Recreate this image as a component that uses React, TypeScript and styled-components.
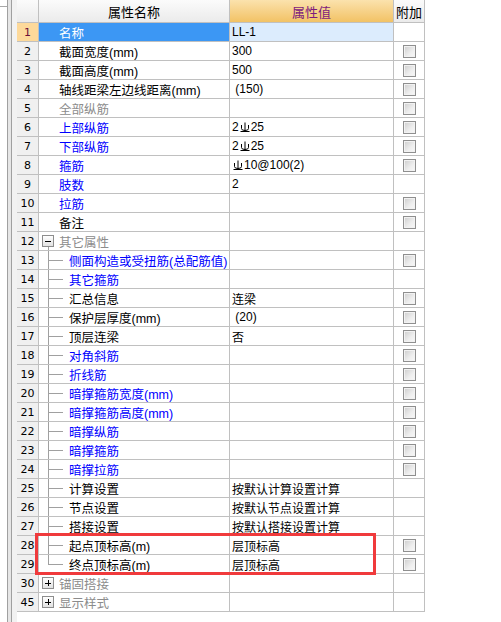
import React from "react";
import styled, { createGlobalStyle } from "styled-components";

type Tone = "normal" | "muted" | "link";
type Kind = "plain" | "group" | "child";

type PropRow = {
  no: number;
  name: string;
  value?: React.ReactNode;
  tone: Tone;
  kind: Kind;
  check?: boolean;
  open?: boolean;
  last?: boolean;
  selected?: boolean;
};

const GlobalStyle = createGlobalStyle`
  html, body {
    margin: 0;
    padding: 0;
    background: #fff;
  }
  body {
    font-family: "Noto Sans CJK SC", "Liberation Sans", sans-serif;
  }
`;

const COLUMNS = "22px 191px 164px 31px";
const GRID = "#c0c0c0";

const Page = styled.div`
  display: flex;
  height: 100vh;
  background: #fff;
`;

const Gutter = styled.div`
  flex: none;
  width: 17px;
  background:
    linear-gradient(#a8a8a8, #a8a8a8) 0 6px / 7px 1px no-repeat,
    linear-gradient(
      to right,
      #fff 0 7px,
      #a0a0a0 7px 8px,
      #e6e6e6 8px 11px,
      #a0a0a0 11px 12px,
      #f2f2f2 12px 17px
    );
`;

const Sheet = styled.div`
  position: relative;
  align-self: flex-start;
  display: flex;
  flex-direction: column;
`;

const HeaderRow = styled.div`
  display: grid;
  grid-template-columns: ${COLUMNS};
  height: 23px;
`;

const Row = styled.div`
  display: grid;
  grid-template-columns: ${COLUMNS};
  height: 19px;
`;

const HeadCell = styled.div<{ $accent?: boolean }>`
  box-sizing: border-box;
  display: flex;
  align-items: center;
  justify-content: center;
  border-right: 1px solid ${GRID};
  border-bottom: 1px solid ${GRID};
  background: ${(p) =>
    p.$accent
      ? "linear-gradient(#fbe2ad, #f2c265)"
      : "linear-gradient(#fbfbfb, #ebebeb)"};
  color: ${(p) => (p.$accent ? "#7d1a7d" : "#000")};
  font-size: 13px;
  white-space: nowrap;
`;

const NumberCell = styled.div<{ $active?: boolean }>`
  box-sizing: border-box;
  display: flex;
  align-items: center;
  justify-content: center;
  border-right: 1px solid ${GRID};
  border-bottom: 1px solid ${GRID};
  background: ${(p) => (p.$active ? "#fdd99a" : "#f0f0f0")};
  color: ${(p) => (p.$active ? "#6b0f3a" : "#000")};
  font-family: "DejaVu Sans", sans-serif;
  font-size: 11px;
`;

const NameCell = styled.div<{ $selected?: boolean; $kind: Kind; $open?: boolean }>`
  box-sizing: border-box;
  display: flex;
  align-items: center;
  overflow: hidden;
  white-space: nowrap;
  border-right: 1px solid ${GRID};
  border-bottom: 1px solid ${GRID};
  padding-left: ${(p) => (p.$kind === "plain" ? "20px" : p.$kind === "group" ? "3px" : "0")};
  background: ${(p) =>
    p.$selected
      ? "#3c97f4"
      : p.$open
      ? "linear-gradient(#a0a0a0, #a0a0a0) 9px 15px / 1px 100% no-repeat, #fff"
      : "#fff"};
`;

const ValueCell = styled.div<{ $selected?: boolean }>`
  box-sizing: border-box;
  display: flex;
  align-items: center;
  overflow: hidden;
  white-space: pre;
  border-right: 1px solid ${GRID};
  border-bottom: 1px solid ${GRID};
  padding-left: 2px;
  background: ${(p) => (p.$selected ? "#dcecfd" : "#fff")};
  color: #000;
  font-family: "Liberation Sans", "Noto Sans CJK SC", sans-serif;
  font-size: 12px;
`;

const AttachCell = styled.div`
  box-sizing: border-box;
  display: flex;
  align-items: center;
  justify-content: center;
  border-right: 1px solid ${GRID};
  border-bottom: 1px solid ${GRID};
  background: #fff;
`;

const Label = styled.span<{ $tone: Tone; $selected?: boolean }>`
  font-family: "Liberation Sans", "Noto Sans CJK SC", sans-serif;
  font-size: 12.5px;
  color: ${(p) =>
    p.$selected
      ? "#fff"
      : p.$tone === "link"
      ? "#0000ff"
      : p.$tone === "muted"
      ? "#8c8c8c"
      : "#000"};
`;

const Branch = styled.span<{ $last?: boolean }>`
  flex: none;
  align-self: stretch;
  width: 30px;
  background:
    linear-gradient(#a0a0a0, #a0a0a0) 9px 0 / 1px ${(p) => (p.$last ? "50%" : "100%")} no-repeat,
    linear-gradient(#a0a0a0, #a0a0a0) 9px 50% / 15px 1px no-repeat;
`;

const Toggle = styled.span`
  flex: none;
  box-sizing: border-box;
  width: 12px;
  height: 12px;
  margin-right: 5px;
  display: flex;
  align-items: center;
  justify-content: center;
  border: 1px solid #8d8d8d;
  background: linear-gradient(#ffffff, #e2e2e2);
`;

const Checkbox = styled.span`
  box-sizing: border-box;
  width: 13px;
  height: 13px;
  border: 1px solid #8f8f8f;
  box-shadow: inset 0 0 0 1px #f2f2f2;
  background: linear-gradient(to bottom right, #cdcdcd 0%, #eeeeee 60%, #f8f8f8 100%);
`;

const Highlight = styled.div`
  position: absolute;
  left: 18px;
  top: 533px;
  width: 341px;
  height: 42px;
  box-sizing: border-box;
  border: 3px solid #f03a3c;
  pointer-events: none;
`;

const Grade = () => (
  <svg width="10" height="12" viewBox="0 0 10 12" style={{ margin: "0 1px" }}>
    <g fill="none" stroke="#000" strokeWidth="1">
      <path d="M5 1.5V10.5" />
      <path d="M1.5 4V7.5Q1.5 9.5 5 9.5Q8.5 9.5 8.5 7.5V4" />
      <path d="M0.5 10.5H9.5" />
    </g>
  </svg>
);

const ToggleIcon = ({ open }: { open?: boolean }) => (
  <svg width="8" height="8" viewBox="0 0 8 8">
    <path d="M1 4H7" stroke="#000" strokeWidth="1" shapeRendering="crispEdges" />
    {!open && <path d="M4 1V7" stroke="#000" strokeWidth="1" shapeRendering="crispEdges" />}
  </svg>
);

const rows: PropRow[] = [
  { no: 1, name: "名称", value: "LL-1", tone: "normal", kind: "plain", selected: true },
  { no: 2, name: "截面宽度(mm)", value: "300", tone: "normal", kind: "plain", check: true },
  { no: 3, name: "截面高度(mm)", value: "500", tone: "normal", kind: "plain", check: true },
  { no: 4, name: "轴线距梁左边线距离(mm)", value: " (150)", tone: "normal", kind: "plain", check: true },
  { no: 5, name: "全部纵筋", tone: "muted", kind: "plain", check: true },
  { no: 6, name: "上部纵筋", value: <>2<Grade />25</>, tone: "link", kind: "plain", check: true },
  { no: 7, name: "下部纵筋", value: <>2<Grade />25</>, tone: "link", kind: "plain", check: true },
  { no: 8, name: "箍筋", value: <> <Grade />10@100(2)</>, tone: "link", kind: "plain", check: true },
  { no: 9, name: "肢数", value: "2", tone: "link", kind: "plain" },
  { no: 10, name: "拉筋", tone: "link", kind: "plain", check: true },
  { no: 11, name: "备注", tone: "normal", kind: "plain", check: true },
  { no: 12, name: "其它属性", tone: "muted", kind: "group", open: true },
  { no: 13, name: "侧面构造或受扭筋(总配筋值)", tone: "link", kind: "child", check: true },
  { no: 14, name: "其它箍筋", tone: "link", kind: "child" },
  { no: 15, name: "汇总信息", value: "连梁", tone: "normal", kind: "child", check: true },
  { no: 16, name: "保护层厚度(mm)", value: " (20)", tone: "normal", kind: "child", check: true },
  { no: 17, name: "顶层连梁", value: "否", tone: "normal", kind: "child", check: true },
  { no: 18, name: "对角斜筋", tone: "link", kind: "child", check: true },
  { no: 19, name: "折线筋", tone: "link", kind: "child", check: true },
  { no: 20, name: "暗撑箍筋宽度(mm)", tone: "link", kind: "child", check: true },
  { no: 21, name: "暗撑箍筋高度(mm)", tone: "link", kind: "child", check: true },
  { no: 22, name: "暗撑纵筋", tone: "link", kind: "child", check: true },
  { no: 23, name: "暗撑箍筋", tone: "link", kind: "child", check: true },
  { no: 24, name: "暗撑拉筋", tone: "link", kind: "child", check: true },
  { no: 25, name: "计算设置", value: "按默认计算设置计算", tone: "normal", kind: "child" },
  { no: 26, name: "节点设置", value: "按默认节点设置计算", tone: "normal", kind: "child" },
  { no: 27, name: "搭接设置", value: "按默认搭接设置计算", tone: "normal", kind: "child" },
  { no: 28, name: "起点顶标高(m)", value: "层顶标高", tone: "normal", kind: "child", check: true },
  { no: 29, name: "终点顶标高(m)", value: "层顶标高", tone: "normal", kind: "child", check: true, last: true },
  { no: 30, name: "锚固搭接", tone: "muted", kind: "group" },
  { no: 45, name: "显示样式", tone: "muted", kind: "group" },
];

const App: React.FC = () => {
  return (
    <Page>
      <GlobalStyle />
      <Gutter />
      <Sheet>
        <HeaderRow>
          <HeadCell />
          <HeadCell>属性名称</HeadCell>
          <HeadCell $accent>属性值</HeadCell>
          <HeadCell>附加</HeadCell>
        </HeaderRow>
        {rows.map((row) => (
          <Row key={row.no}>
            <NumberCell $active={row.selected}>{row.no}</NumberCell>
            <NameCell $selected={row.selected} $kind={row.kind} $open={row.open}>
              {row.kind === "group" && (
                <Toggle>
                  <ToggleIcon open={row.open} />
                </Toggle>
              )}
              {row.kind === "child" && <Branch $last={row.last} />}
              <Label $tone={row.tone} $selected={row.selected}>
                {row.name}
              </Label>
            </NameCell>
            <ValueCell $selected={row.selected}>{row.value}</ValueCell>
            <AttachCell>{row.check && <Checkbox />}</AttachCell>
          </Row>
        ))}
        <Highlight />
      </Sheet>
    </Page>
  );
};

export default App;
